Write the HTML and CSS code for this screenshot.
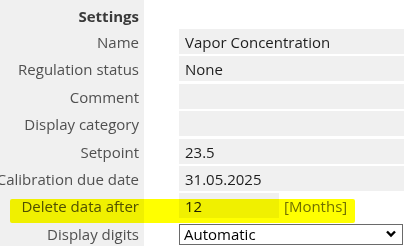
FILE: index.html
```html
<!DOCTYPE html>
<html>
<head>
<meta charset="utf-8">
<link rel="stylesheet" href="styles.css">
</head>
<body>
<div class="form">
  <div class="lbl head">Settings</div><div class="val head"></div>
  <div class="lbl">Name</div><div class="val"><div class="box">Vapor Concentration</div></div>
  <div class="lbl">Regulation status</div><div class="val"><div class="box">None</div></div>
  <div class="lbl">Comment</div><div class="val"><div class="box"></div></div>
  <div class="lbl">Display category</div><div class="val"><div class="box"></div></div>
  <div class="lbl">Setpoint</div><div class="val"><div class="box">23.5</div></div>
  <div class="lbl">Calibration due date</div><div class="val"><div class="box">31.05.2025</div></div>
  <div class="lbl">Delete data after</div><div class="val"><div class="box short">12</div><span class="unit">[Months]</span></div>
  <div class="lbl">Display digits</div><div class="val"><div class="select"><span>Automatic</span><svg class="chev" width="12" height="8" viewBox="0 0 12 8"><path d="M2 1.5 L6 5.5 L10 1.5" fill="none" stroke="#000" stroke-width="2.4"/></svg></div></div>
  <div class="marker"></div>
</div>
</body>
</html>
```
FILE: styles.css
```css
html, body { margin: 0; padding: 0; background: #fff; }
body { width: 404px; height: 246px; overflow: hidden; font-family: "Open Sans", "Noto Sans", sans-serif; font-size: 15px; }
.form { position: relative; display: grid; grid-template-columns: 144px 1fr; grid-template-rows: 29px; grid-auto-rows: 27.4px; }
.lbl { background: #f0f0f0; color: #505050; text-align: right; padding-right: 5px; line-height: 26px; white-space: nowrap; direction: rtl; }
.head { height: 29px; }
.lbl.head { font-weight: bold; color: #3a3a3a; line-height: 32px; }
.val { padding-left: 35px; display: flex; align-items: flex-start; }
.box { background: #f0f0f0; height: 25px; line-height: 26px; flex: 1; padding-left: 6px; color: #1e1e1e; }
.box.short { flex: 0 0 100px; box-sizing: border-box; }
.unit { color: #707070; margin-left: 5px; line-height: 26px; }
.select { margin-top: 3px; height: 21px; box-sizing: border-box; border: 1px solid #6a6a6a; flex: 0 0 224px; display: flex; align-items: center; justify-content: space-between; padding: 0 5px 0 4px; color: #000; background: #fff; }
.marker { position: absolute; left: 10px; top: 199px; width: 345px; height: 24px; background: #ffff00; border-radius: 2px; mix-blend-mode: multiply; }
```
